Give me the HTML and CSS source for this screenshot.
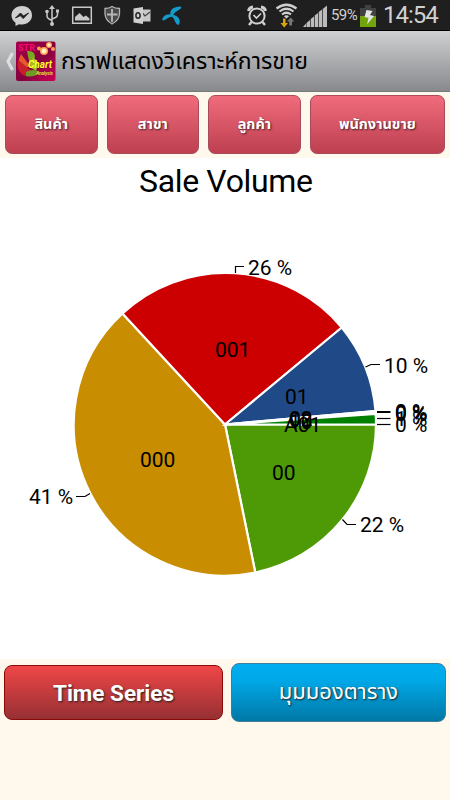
FILE: index.html
```html
<!DOCTYPE html>
<html lang="th">
<head>
    <meta charset="UTF-8">
    <meta name="viewport" content="width=device-width, initial-scale=1.0">
    <title>Sale Volume</title>
    <link rel="stylesheet" href="styles.css">
</head>
<body>
    <div class="status-bar">
        <svg class="status-icons" width="190" height="30" viewBox="0 0 190 30">
            <!-- messenger -->
            <path fill="#d0d0d0" d="M22 6C16 6 11.5 10 11.5 15.300C11.500 18.500 13 21 15.500 22.700V26L19 24.200C26 25.800 32 21.500 32 15.300C32 10 28 6 22 6Z"/>
            <path d="M15.500 18L20.500 13L23.500 16L28.500 13L23.200 18.500L20.300 15.600Z" fill="#1f1f1f" stroke="#1f1f1f"/>
            <!-- usb -->
            <g fill="none" stroke="#c8c8c8" stroke-width="1.500">
                <path d="M52 8V24M47 12V16Q47 18 49 19L52 20.500M57.500 11V14.500Q57.500 16.500 55.500 17.500L52 19"/>
            </g>
            <g fill="#c8c8c8">
                <path d="M49 9L52 5L55 9Z"/>
                <circle cx="52" cy="24" r="2"/>
                <circle cx="47" cy="11.500" r="1.800"/>
                <path d="M56 9.500h3v3h-3z"/>
            </g>
            <!-- picture -->
            <path d="M72.700 7.200H91.300V23.300H72.700Z" fill="none" stroke="#c8c8c8" stroke-width="1.500"/>
            <path d="M75 20.500V17L79.500 13L83.500 17L86 15.500L89.500 18.500V20.500Z" fill="#c8c8c8"/>
            <!-- shield -->
            <path d="M105 8.500Q109 8.500 112 6.500Q115 8.500 119.500 8.500V14Q119 20.500 112 24Q105.500 20.500 105 14Z" fill="#4a4a4a" stroke="#b4b4b4" stroke-width="1.300"/>
            <path d="M112 9V22M107 14.500H117.500" stroke="#b8b8b8" stroke-width="1.800"/>
            <!-- outlook -->
            <path d="M141 9.500H150.500V21.500H141Z" fill="#c8c8c8"/>
            <path d="M142 12.500L145 16L150 12" fill="none" stroke="#444" stroke-width="1.200"/>
            <path d="M133.500 8.500L143 7V24L133.500 22.500Z" fill="#d0d0d0"/>
            <ellipse cx="138" cy="15.500" rx="2.100" ry="2.800" fill="none" stroke="#222" stroke-width="1.500"/>
            <!-- operator -->
            <g fill="#159bc9">
                <path d="M171 16C168.500 10.500 173 6.500 181 6.500C183 9.500 175 10.500 172.500 16Z"/>
                <path d="M173 15C167 12.500 161.500 17 162.500 20.500C166 20.500 168 16.500 173 16.500Z"/>
                <path d="M171.500 14.500C178 15 182 20.500 178.500 25C174.500 24 175 18 171.500 16.500Z"/>
            </g>
        </svg>
        <div class="status-right">
            <svg width="86" height="30" viewBox="245 0 86 30">
                <!-- alarm -->
                <g fill="none" stroke="#d0d0d0">
                    <circle cx="257" cy="16" r="7.600" stroke-width="2"/>
                    <path d="M253.500 15L256.500 18L261 13.500" stroke-width="1.700"/>
                    <path d="M251.500 22L249 25M262.500 22L265 25" stroke-width="2.500"/>
                    <path d="M248.500 11A5 5 0 0 1 253 7M261 7A5 5 0 0 1 265.500 11" stroke-width="3"/>
                </g>
                <!-- wifi -->
                <g fill="none" stroke="#cfcfcf" stroke-width="2.200">
                    <path d="M276.500 8.500Q286.500 1 296.500 8.500"/>
                    <path d="M279.500 11.500Q286.500 6 293.500 11.500"/>
                    <path d="M282 14.500Q286.500 11 291 14.500"/>
                </g>
                <path d="M284 16.200Q286.500 14.500 289 16.200L286.500 18.500Z" fill="#cfcfcf"/>
                <path d="M283 18.500H285.500V23H288L284.200 27.500L280.500 23H283Z" fill="#d9a60c"/>
                <path d="M289.300 25.500V21.500H287L290.700 17.500L294.300 21.500H292V25.500Z" fill="#777"/>
                <!-- signal -->
                <path d="M306.500 27V23L310 20V27ZM310.700 27V19L314 16.500V27ZM314.700 27V15.500L318 13V27ZM318.700 27V12L322 9.500V27ZM322.700 27V9L327 5.500V27ZM306 23.500V27H303Z" fill="#bcbcbc"/>
            </svg>
            <span class="battery-level">59%</span>
            <svg width="17" height="30" viewBox="360 0 17 30">
                <path d="M365 5H371V8H376V27H360V8H365Z" fill="#414141"/>
                <path d="M360 16H376V27H360Z" fill="#72a50a"/>
                <path d="M366.500 10L372.500 11L370 15L374 16L367 24.500L368.500 18L364.500 17Z" fill="#e4e4e4"/>
            </svg>
            <span class="clock">14:54</span>
        </div>
    </div>

    <div class="action-bar">
        <svg width="58" height="60" viewBox="0 31 58 60">
            <defs>
                <linearGradient id="logoBg" x1="0" y1="0" x2="1" y2="1">
                    <stop offset="0" stop-color="#a5004d"/>
                    <stop offset=".55" stop-color="#84003f"/>
                    <stop offset="1" stop-color="#d10056"/>
                </linearGradient>
            </defs>
            <path d="M12.500 53L8 61.500L12.500 70" fill="none" stroke="#dedede" stroke-width="3.200"/>
            <rect x="16" y="41.500" width="39.500" height="39.500" rx="2" fill="url(#logoBg)"/>
            <text class="logo-str" x="18" y="50.500" textLength="17" lengthAdjust="spacingAndGlyphs">STR</text>
            <path d="M30 66L21 54Q16 63 21 70Z" fill="#e5582e"/>
            <path d="M30 66L27 51Q35 50 35 57Z" fill="#78a91f"/>
            <path d="M28 68L18 60Q16 72 25 76Q29 76 30 70Z" fill="#c7202b"/>
            <path d="M30 67L33 57Q40 62 36 71Z" fill="#a9bd29"/>
            <path d="M26 72Q33 68 40 72Q34 78 26 76Z" fill="#6e9b25"/>
            <g fill="#ff9d55">
                <circle cx="39" cy="48.500" r="2"/>
                <circle cx="44" cy="51" r="4"/>
                <circle cx="49" cy="45" r="3"/>
                <circle cx="53" cy="49" r="2"/>
            </g>
            <g fill="#fff0bd">
                <circle cx="44" cy="51" r="2.500"/>
                <circle cx="49" cy="45" r="1.800"/>
            </g>
            <text class="logo-chart" x="28" y="68" textLength="24">Chart</text>
            <text class="logo-sub" x="36" y="75" textLength="17">Analysis</text>
        </svg>
        <svg class="page-title" width="260" height="60">
            <text x="3" y="38" textLength="247" lengthAdjust="spacingAndGlyphs">กราฟแสดงวิเคราะห์การขาย</text>
        </svg>
    </div>

    <div class="tabs">
        <button class="tab tab-product">สินค้า</button>
        <button class="tab tab-branch">สาขา</button>
        <button class="tab tab-customer">ลูกค้า</button>
        <button class="tab tab-staff">พนักงานขาย</button>
    </div>

    <div class="chart">
        <svg width="450" height="501" viewBox="0 158 450 501">
            <text class="chart-title" x="139" y="192" textLength="174">Sale Volume</text>
            <g stroke="#fff" stroke-width="2.200">
                <path fill="#4e9a06" d="M225 424.500H376A151 151 0 0 1 255.300 572.500Z"/>
                <path fill="#c88d00" d="M225 424.500L255.300 572.500A151 151 0 0 1 122.500 313.500Z"/>
                <path fill="#cc0000" d="M225 424.500L122.500 313.500A151 151 0 0 1 341.800 327.500Z"/>
                <path fill="#204a87" d="M225 424.500L341.800 327.500A151 151 0 0 1 375.500 411Z"/>
                <path fill="#fff" d="M225 424.500L375.500 411A151 151 0 0 1 375.700 414Z"/>
                <path fill="#008000" d="M225 424.500L375.700 414A151 151 0 0 1 376 424.500Z"/>
            </g>
            <g class="leader">
                <path d="M235.500 273V266.500H244"/>
                <path d="M365.500 367L371 364.500H380"/>
                <path d="M342.500 519.500L347 524.500H356"/>
                <path d="M90 493.500L85 496.500H76"/>
                <path d="M377 412H390.500" stroke-width="2"/>
                <path d="M377 418.500H390.500"/>
                <path d="M377 424.500H390.500"/>
            </g>
            <g class="label">
                <text x="248" y="274.500">26 %</text>
                <text x="384" y="372.500">10 %</text>
                <text x="360" y="531.500">22 %</text>
                <text x="29" y="504">41 %</text>
                <text x="395" y="418.500">0 %</text>
                <text x="395" y="419.500">0 %</text>
                <text x="395" y="420.500">0 %</text>
                <text x="395" y="426">1 %</text>
                <text x="395" y="431.500">0 %</text>
                <text x="215" y="356.500">001</text>
                <text x="140" y="467">000</text>
                <text x="272" y="480">00</text>
                <text x="285" y="403.500">01</text>
                <text x="289" y="426">02</text>
                <text x="289" y="427">03</text>
                <text x="289" y="429">10</text>
                <text x="284" y="431.500">A01</text>
            </g>
        </svg>
    </div>

    <div class="bottom-bar">
        <button class="btn btn-time">Time Series</button>
        <button class="btn btn-table">มุมมองตาราง</button>
    </div>
</body>
</html>
```
FILE: styles.css
```css
* {
    box-sizing: border-box;
}
body {
    margin: 0;
    width: 450px;
    height: 800px;
    overflow: hidden;
    font-family: Roboto, "Noto Sans Thai", sans-serif;
    background-color: #fff9ed;
}
svg {
    display: block;
    flex: none;
}
.status-bar {
    display: flex;
    justify-content: space-between;
    height: 31px;
    background: #1f1f1f;
    border-bottom: 1px solid #000;
    color: #d0d0d0;
}
.status-right {
    display: flex;
    width: 205px;
    line-height: 31px;
    white-space: nowrap;
}
.battery-level {
    width: 29px;
    font-size: 15px;
    letter-spacing: -0.6px;
}
.clock {
    padding-left: 6px;
    font-size: 24px;
    letter-spacing: -1px;
}
.action-bar {
    display: flex;
    height: 61px;
    background: linear-gradient(#cfd0d1, #88898d);
    border-bottom: 1px solid #777a7d;
}
.page-title {
    font-size: 23px;
}
.logo-str {
    font-size: 8.5px;
    font-weight: bold;
    fill: #f40b6c;
}
.logo-chart {
    font-size: 10px;
    font-style: italic;
    font-weight: bold;
    fill: #ffff20;
}
.logo-sub {
    font-size: 5px;
    font-style: italic;
    font-weight: bold;
    fill: #e4d63a;
}
.tabs {
    display: flex;
    gap: 9px;
    height: 66px;
    padding: 3px 5px 4px;
}
.tab {
    padding: 0;
    border: 1px solid #a94b58;
    border-radius: 7px;
    background: linear-gradient(#f06c7c, #bd3f50);
    color: #fff;
    font-family: inherit;
    font-size: 14.5px;
    font-weight: bold;
    text-shadow: 1px 1px 2px #402026;
}
.tab-product,
.tab-branch,
.tab-customer {
    width: 93px;
}
.tab-staff {
    width: 136px;
}
.chart {
    height: 501px;
    background: #fff;
}
.chart-title {
    font-size: 32px;
}
.label {
    font-size: 21px;
}
.leader {
    fill: none;
    stroke: #000;
    stroke-width: 1.2;
}
.bottom-bar {
    display: flex;
    align-items: flex-start;
    gap: 8px;
    padding: 4px 4px 0;
}
.btn {
    padding: 0;
    border-radius: 8px;
    color: #fff;
    font-family: inherit;
    font-size: 22px;
    text-shadow: 1px 1px 2px #222;
}
.btn-time {
    width: 219px;
    height: 55px;
    margin-top: 2px;
    border: 1px solid #8b0808;
    background: linear-gradient(#f04647, #963033);
    font-size: 22.5px;
    font-weight: bold;
}
.btn-table {
    width: 215px;
    height: 59px;
    border: 1px solid #3f7d98;
    background: linear-gradient(#00adef, #00aaea 25%, #0078a6);
}
```
